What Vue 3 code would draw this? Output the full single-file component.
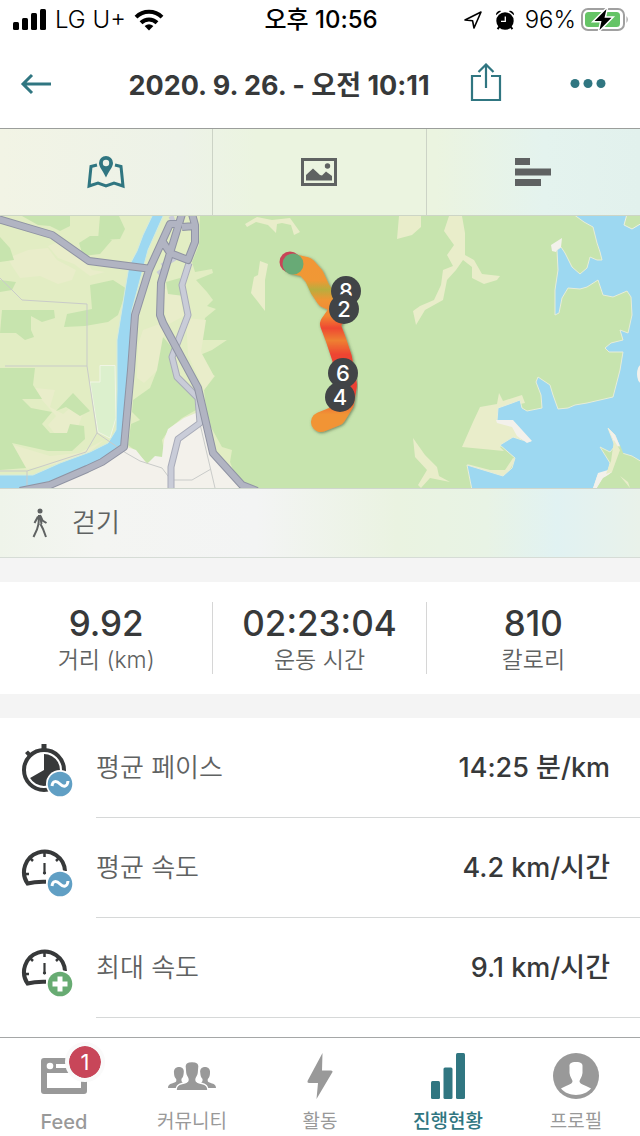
<script setup>
const stats = [
  { value: '9.92', label: '거리 (km)' },
  { value: '02:23:04', label: '운동 시간' },
  { value: '810', label: '칼로리' },
]

const details = [
  { icon: 'stopwatch', badge: 'average', label: '평균 페이스', value: '14:25 분/km' },
  { icon: 'gauge', badge: 'average', label: '평균 속도', value: '4.2 km/시간' },
  { icon: 'gauge', badge: 'max', label: '최대 속도', value: '9.1 km/시간' },
]

const markers = [
  { x: 346, y: 291, n: 8 },
  { x: 344, y: 309, n: 2 },
  { x: 343, y: 373, n: 6 },
  { x: 340, y: 397, n: 4 },
]
</script>

<template>
  <div class="screen">
    <div class="status">
      <div class="status-side">
        <svg width="34" height="22" viewBox="0 0 34 22" aria-hidden="true">
          <rect x="0" y="13" width="6" height="8" rx="1.5" />
          <rect x="9" y="9" width="6" height="12" rx="1.5" />
          <rect x="18" y="4" width="6" height="17" rx="1.5" />
          <rect x="27" y="0" width="6" height="21" rx="1.5" />
        </svg>
        <span class="carrier">LG U+</span>
        <svg width="30" height="22" viewBox="0 0 30 22" aria-hidden="true">
          <path d="M2 8.2 A18.5 18.5 0 0 1 28 8.2" fill="none" stroke="#000" stroke-width="4" />
          <path d="M7 13.7 A11.5 11.5 0 0 1 23 13.7" fill="none" stroke="#000" stroke-width="4" />
          <path d="M15 21.5 L10.6 17 Q15 13.6 19.4 17 Z" />
        </svg>
      </div>
      <span class="clock">오후 10:56</span>
      <div class="status-side end">
        <svg width="20" height="20" viewBox="0 0 20 20" aria-hidden="true">
          <path d="M2 10 L18 2 L11 18 L9.6 10.8 Z" fill="none" stroke="#000" stroke-width="1.6" stroke-linejoin="round" />
        </svg>
        <svg class="alarm" width="20" height="20" viewBox="0 0 20 20" aria-hidden="true">
          <circle cx="10" cy="11" r="8.700" />
          <path d="M1 5.200 A4 4 0 0 1 6.300 1 Z M13.700 1 A4 4 0 0 1 19 5.200 Z" />
          <path d="M4.500 16.500 L2.600 19.200 M15.500 16.500 L17.400 19.200" stroke="#000" stroke-width="2" />
          <path d="M10.300 6.500 V11.300 H6" fill="none" stroke="#fff" stroke-width="1.300" />
        </svg>
        <span class="percent">96%</span>
        <svg width="48" height="24" viewBox="0 0 48 24" aria-hidden="true">
          <rect x="1" y="1" width="42" height="21" rx="6" fill="none" stroke="#a0a0a0" stroke-width="2" />
          <path d="M45.500 8 q2.500 3.500 0 7 z" fill="#a0a0a0" />
          <rect x="4" y="4" width="35" height="15" rx="3.500" fill="#65c466" />
          <path d="M25.500 1 L13.500 13 H20.500 L18.500 22 L30.500 9.800 H23.500 Z" stroke="#fff" stroke-width="3" />
          <path d="M25.500 1 L13.500 13 H20.500 L18.500 22 L30.500 9.800 H23.500 Z" />
        </svg>
      </div>
    </div>

    <header class="nav">
      <button class="plain back" aria-label="뒤로">
        <svg width="32" height="22" viewBox="0 0 32 22" aria-hidden="true">
          <path d="M31 11 H3 M12 2 L3 11 L12 20" fill="none" stroke="#307681" stroke-width="3" />
        </svg>
      </button>
      <h1>2020. 9. 26. - 오전 10:11</h1>
      <button class="plain share" aria-label="공유">
        <svg width="32" height="42" viewBox="0 0 32 42" aria-hidden="true">
          <path d="M11 13 H2 V37 H30 V13 H21 M16 25 V1.500 M8.500 9 L16 1.500 L23.500 9" fill="none" stroke="#307681" stroke-width="2.200" />
        </svg>
      </button>
      <button class="plain" aria-label="더 보기">
        <svg width="36" height="10" viewBox="0 0 36 10" fill="#307681" aria-hidden="true">
          <circle cx="5" cy="4.500" r="4.500" /><circle cx="18" cy="4.500" r="4.500" /><circle cx="31" cy="4.500" r="4.500" />
        </svg>
      </button>
    </header>

    <div class="views">
      <button class="plain view" aria-label="지도">
        <svg width="40" height="34" viewBox="0 0 40 34" aria-hidden="true">
          <path d="M11 10 L5 11.500 L3 31 L12 28 L20 31 L28 28 L37 31 L35 11.500 L29 10" fill="none" stroke="#307681" stroke-width="3" />
          <path d="M20 1 A7 7 0 0 1 27 8 C27 12 23 16 20 22.500 C17 16 13 12 13 8 A7 7 0 0 1 20 1 Z" fill="#307681" />
          <circle cx="20" cy="8" r="3.200" fill="#eef3e8" />
        </svg>
      </button>
      <button class="plain view" aria-label="사진">
        <svg width="36" height="28" viewBox="0 0 36 28" fill="#5f6262" aria-hidden="true">
          <rect x="1.500" y="1.500" width="33" height="25" fill="none" stroke="#5f6262" stroke-width="3" />
          <circle cx="26.500" cy="8" r="2.700" />
          <path d="M5 22.500 V17 L12 10.500 L19 17 L21 17.500 L25 13.500 L31 18 V22.500 Z" />
        </svg>
      </button>
      <button class="plain view" aria-label="구간">
        <svg width="36" height="28" viewBox="0 0 36 28" fill="#5f6262" aria-hidden="true">
          <rect width="15" height="7" /><rect y="10.500" width="36" height="7" /><rect y="21" width="26" height="7" />
        </svg>
      </button>
    </div>

    <svg class="map" viewBox="0 216 640 272" role="img" aria-label="운동 경로 지도">
      <defs>
        <linearGradient id="effort" gradientUnits="userSpaceOnUse" x1="0" y1="256" x2="0" y2="432">
          <stop offset="0" stop-color="#f29636" />
          <stop offset="0.14" stop-color="#f09835" />
          <stop offset="0.19" stop-color="#b9ad3d" />
          <stop offset="0.25" stop-color="#f09535" />
          <stop offset="0.34" stop-color="#f28732" />
          <stop offset="0.41" stop-color="#ee4833" />
          <stop offset="0.48" stop-color="#ee8033" />
          <stop offset="0.56" stop-color="#ee4432" />
          <stop offset="0.78" stop-color="#ec4030" />
          <stop offset="0.9" stop-color="#f19435" />
          <stop offset="1" stop-color="#f19435" />
        </linearGradient>
        <filter id="soft" x="-20%" y="-20%" width="140%" height="140%">
          <feDropShadow dx="1" dy="1" stdDeviation="1.500" flood-color="#4b6040" flood-opacity="0.700" />
        </filter>
      </defs>
      <rect x="0" y="216" width="640" height="272" fill="#c7e4ae" />

      <path fill="#e2edc3" d="M0 216 H200 L199 245 192 262 195 272 212 269 213 273 196 280 207 292 213 300 207 306 216 309 205 318 201 340 227 340 212 350 200 355 203 368 215 376 204 390 207 420 222 447 232 450 230 462 237 480 245 488 H0Z" />
      <g fill="#e9edca">
        <path d="M8 258 L28 250 48 248 57 260 76 270 72 280 58 284 40 276 20 278 12 266Z" />
        <path d="M63 240 L78 248 92 270 105 272 90 276 74 264 58 258 48 246Z" />
        <path d="M143 330 L165 322 163 346 158 370 144 383 137 378 138 345Z" />
        <path d="M186 318 L206 320 201 352 214 376 204 390 188 355Z" />
        <path d="M35 388 L55 390 50 407 63 414 70 408 84 411 76 432 55 434 48 425 56 416 42 400Z" />
        <path d="M10 444 L50 456 79 453 104 440 80 460 27 469Z" />
        <path d="M161 287 L180 295 184 316 167 325Z" />
      </g>
      <g fill="#c7e4ae">
        <path d="M22 216 H70 V226 L60 231 50 226 38 225Z" />
        <path d="M100 216 H119 L125 229 120 239 98 240Z" />
        <path d="M79 243 L90 236 101 236 112 240 100 254 83 256Z" />
        <path d="M0 237 L10 248 14 260 0 262Z" />
        <path d="M90 285 L113 280 127 289 118 315 108 322 85 326 64 327 67 314 92 309Z" />
        <path d="M2 310 L54 310 55 318 42 322 31 316 31 330 34 337 25 340 16 333 0 333Z" />
        <path d="M0 368 L35 368 33 385 42 399 22 399 31 408 52 412 42 424 50 433 67 433 70 424 84 426 85 439 72 451 48 451 12 443 26 468 0 470Z" />
        <path d="M56 411 L73 393 90 411 80 416 66 407Z" />
        <path d="M163 337 L174 350 174 374 196 397 196 410 182 418 170 428 162 440 165 456 147 463 136 451 128 445 131 424 140 420 132 412 133 400 150 388 157 370Z" />
        <path d="M166 282 L180 278 184 296 168 294Z" />
        <path d="M0 280 L16 282 12 290 0 292Z" />
      </g>
      <path fill="#f3f1eb" d="M20 488 L90 472 127 447 136 450 147 464 155 456 162 457 164 440 168 429 184 418 203 410 213 453 240 488Z" />
      <path fill="#dcf0cd" stroke="#f0f5e4" d="M100 365.500 H115 L116 418 110 438 98 432 90 382 H100Z" />

      <path fill="#9dd8f1" stroke="#d5ebdc" d="M153 214 L143 235 137 251 129 266 125 290 121 315 117 340 117 390 116 430 108 443 90 452 60 463 33 475 -2 475 V490 L30 488 60 478 88 468 105 458 124 445 127 400 132 310 140 280 148 250 164 214Z" />

      <g fill="none" stroke="#c9cbc9" stroke-width="1">
        <path d="M0 278 L22 300 55 302 87 304 V366 H5 M87 366 L97 433 86 452 27 471 H0 M97 433 L126 453 140 461 162 468 171 480 192 480 211 469 M200 424 L215 488 M27 471 V488" />
      </g>

      <g fill="none" stroke-linejoin="round">
        <path stroke="#a8abb9" stroke-width="7" d="M189 263 L182 285 188 315 172 357 177 377 198 398 200 423 178 439 171 467 V492" />
        <path stroke="#c9ccd8" stroke-width="5" d="M189 263 L182 285 188 315 172 357 177 377 198 398 200 423 178 439 171 467 V492 M166 268 L158 274 M175 258 L162 266 M171 216 L174 224" />
        <path stroke="#8f93a3" stroke-width="8" d="M-2 219 L52 235 89 261 128 266 152 269 M182 214 L170 253 161 283 160 315 163 323 198 388 213 453 242 485 257 491 M179 224 L170 224 149 270 135 315 131 370 124 447 102 462 87 469 50 485 20 491 M192 214 L195 225 V242 L188 260 170 253 163 242 M182 227 L195 226" />
        <path stroke="#b1b4c2" stroke-width="6" d="M-2 219 L52 235 89 261 128 266 152 269 M182 214 L170 253 161 283 160 315 163 323 198 388 213 453 242 485 257 491 M179 224 L170 224 149 270 135 315 131 370 124 447 102 462 87 469 50 485 20 491 M192 214 L195 225 V242 L188 260 170 253 163 242 M182 227 L195 226" />
      </g>

      <g fill="#e9edca">
        <path d="M260 261 L268 264 265 280 265 311 251 293 254 277 258 275Z" />
        <path d="M245 224 L257 217 272 220 290 218 300 232 294 235 291 225 282 223 277 224 276 233 268 225 256 222 247 227Z" />
        <path d="M399 216 H421 V227 L412 235 397 239Z" />
        <path d="M449 216 H462 L465 233 465 255 474 260 482 274 500 276 497 280 484 284 472 278 472 267 463 260 456 270 447 280 443 300 425 310 416 325 413 311 420 306 434 300 441 285 443 270 453 266 447 255 454 245 444 231Z" />
        <path d="M413 438 L425 455 437 467 439 476 450 482 430 478 421 488 418 485 427 470 415 457Z" />
        <path d="M462 447 L473 422 480 407 497 404 499 393 503 401 522 395 525 403 500 408 497 422 513 425 532 441 513 438 500 447 504 451 Z" />
        <path d="M467 464 L490 470 505 470 513 458 516 459 505 478 480 473Z" />
      </g>

      <path fill="#9dd8f1" stroke="#e7edd8" stroke-linejoin="round" d="M573 214 L584 222 593 227 597 243 600 252 602 260 597 260 590 257 587 268 580 274 572 267 565 253 561 247 557 250 558 270 555 290 555 315 559 313 562 298 568 288 580 289 587 287 598 280 603 295 613 297 627 291 631 297 632 315 628 333 620 330 623 340 611 343 605 348 609 352 623 352 620 370 613 397 600 400 587 403 575 405 568 408 558 409 553 395 550 385 538 377 536 382 541 395 542 408 527 411 522 408 520 400 512 403 498 408 497 421 513 425 520 433 531 441 522 440 513 437 500 445 515 458 512 468 503 476 490 472 467 465 472 490 H593 L598 475 608 471 610 463 600 447 610 452 615 446 608 428 615 435 622 453 632 456 642 462 V214Z" />
      <path fill="#f3f1eb" d="M551 245 L562 238 561 247 557 250 556 252 552 251Z M496 420 L513 420 532 441 527 443 517 436 512 427 497 423Z M593 488 L598 473 608 470 612 472 602 480 597 488Z M608 428 L615 435 620 446 616 447Z" />
      <path fill="#c7e4ae" stroke="#eef0df" d="M627 214 L624 225 632 229 642 223 V214Z" />
      <path fill="#c7e4ae" d="M597 488 L603 478 612 473 620 445 625 458 640 464 V488Z" />
      <path fill="#e9edca" d="M614 440 L620 450 612 472 606 474 611 461Z M620 476 L628 482 630 488 Z" />
      <ellipse cx="641" cy="374" rx="4" ry="9" fill="#f3f1eb" />

      <g filter="url(#soft)" fill="none" stroke="url(#effort)" stroke-width="20" stroke-linecap="round" stroke-linejoin="round">
        <path d="M293 264 L306 267 314 276 320 289 326 298 337 303" />
        <path d="M337 314 L330 324 336 340 342 358 347 385 344 403 336 416 321 422" />
      </g>
      <circle cx="290" cy="262" r="10.500" fill="#c94457" />
      <circle cx="293" cy="264" r="10.500" fill="#68aa76" />
      <g v-for="m in markers" :key="m.n">
        <circle :cx="m.x" :cy="m.y" r="15" fill="#414447" />
        <text :x="m.x" :y="m.y + 8" class="marker">{{ m.n }}</text>
      </g>
    </svg>

    <div class="activity">
      <svg width="16" height="30" viewBox="0 0 16 30" fill="none" stroke="#5f6262" stroke-width="2" aria-hidden="true">
        <circle cx="8" cy="3" r="2.500" fill="#5f6262" stroke="none" />
        <path d="M7 7 L6.500 17 M8 7 L9.500 16 M6 8.500 L2.500 15 M8.500 8 L10.500 12.500 L14.500 15 M6.500 16 L5 21.500 L1.500 29 M8.500 16 L11 21 L14 29" />
      </svg>
      <span>걷기</span>
    </div>

    <section class="stats">
      <div v-for="s in stats" :key="s.label" class="stat">
        <strong>{{ s.value }}</strong>
        <span>{{ s.label }}</span>
      </div>
    </section>

    <ul class="details">
      <li v-for="d in details" :key="d.label">
        <svg width="54" height="54" viewBox="0 0 54 54" aria-hidden="true">
          <g v-if="d.icon === 'stopwatch'">
            <circle cx="24" cy="26" r="20" fill="none" stroke="#37393a" stroke-width="4" />
            <path d="M21.500 0 h5 v6 h-5 Z M5 9 l3 -2.500 4 4 -3 3 Z" fill="#37393a" />
            <path d="M24 26 V10 A16 16 0 1 1 10.100 34 Z" fill="#37393a" />
          </g>
          <g v-else fill="none" stroke="#37393a">
            <path d="M45 27 A20.500 20.500 0 1 0 7.500 39.500 Q15 37.500 26 37.800" stroke-width="4" />
            <path d="M24.500 7 V13 M4 30 H9 M10 14 L13 17 M39 14 L36 17" stroke-width="2.500" />
            <path d="M24.500 19 V30" stroke-width="2.200" />
            <circle cx="24.500" cy="29" r="1.200" />
          </g>
          <circle cx="40" cy="40" r="14" fill="#fff" />
          <circle cx="40" cy="40" r="12.300" :fill="d.badge === 'max' ? '#67ab72' : '#609fc4'" />
          <path v-if="d.badge === 'max'" d="M40 32.500 V47.500 M32.500 40 H47.500" stroke="#fff" stroke-width="5" />
          <path v-else d="M32 42 C32.500 36.500 36.500 36.500 40 40 C43.500 43.500 47.500 43 48 37" fill="none" stroke="#fff" stroke-width="3" />
        </svg>
        <div class="detail">
          <span>{{ d.label }}</span>
          <strong>{{ d.value }}</strong>
        </div>
      </li>
    </ul>

    <nav class="tabs">
      <a href="#feed" class="feed">
        <span class="glyph">
          <svg width="46" height="36" viewBox="0 0 46 36" aria-hidden="true">
            <path fill-rule="evenodd" fill="#999" d="M3 0 H43 Q46 0 46 3 V33 Q46 36 43 36 H3 Q0 36 0 33 V3 Q0 0 3 0 Z M6 15 V30 H40 V15 Z M15 6 V10 H42 V6 Z" />
            <circle cx="9" cy="8" r="3.300" fill="#fff" />
          </svg>
          <span class="count">1</span>
        </span>
        Feed
      </a>
      <a href="#community">
        <span class="glyph">
          <svg width="48" height="28" viewBox="0 0 48 28" fill="#999" aria-hidden="true">
            <path d="M11 5 C14 5 16.500 7 15.700 11 C15.500 15 14 16 13.500 17 C13 20 15 20.500 15 21 L9 26 H0 C0 22 3 22 6.500 20.500 C8.500 20 8.500 19 8.200 17 C7 16 6 14 6 11 C5.500 7 8 5 11 5Z" />
            <path d="M37 5 C34 5 31.500 7 32.300 11 C32.500 15 34 16 34.500 17 C35 20 33 20.500 33 21 L39 26 H48 C48 22 45 22 41.500 20.500 C39.500 20 39.500 19 39.800 17 C41 16 42 14 42 11 C42.500 7 40 5 37 5Z" />
            <path stroke="#fff" stroke-width="1.500" d="M24 -0.500 C29 -0.500 31.500 1.500 31 5 L30.500 11 C30 15 28 15 28 18 C28 20 30 20.500 34 21.500 C38 22.500 40 24 40 28.700 H8 C8 24 10 22.500 14 21.500 C18 20.500 20 20 20 18 C20 15 18 15 17.500 11 L17 5 C16.500 1.500 19 -0.500 24 -0.500Z" />
          </svg>
        </span>
        커뮤니티
      </a>
      <a href="#workout">
        <span class="glyph">
          <svg width="26" height="46" viewBox="0 0 26 46" fill="#999" aria-hidden="true">
            <path d="M15.500 0 L0.500 28 Q0 30 2 30 H11 L9.500 46 L25.500 19 Q26 17.500 24 17.500 H15 Z" />
          </svg>
        </span>
        활동
      </a>
      <a href="#progress" class="active" aria-current="page">
        <span class="glyph">
          <svg width="34" height="46" viewBox="0 0 34 46" fill="#307681" aria-hidden="true">
            <rect x="0" y="28" width="9" height="18" rx="1.500" /><rect x="12.500" y="14.500" width="9" height="31.500" rx="1.500" /><rect x="25" y="0" width="9" height="46" rx="1.500" />
          </svg>
        </span>
        진행현황
      </a>
      <a href="#profile">
        <span class="glyph">
          <svg width="46" height="46" viewBox="0 0 46 46" aria-hidden="true">
            <circle cx="23" cy="23" r="23" fill="#999" />
            <path fill="#fff" d="M23 9 C28 9 30 10.500 29.500 14 L29.500 20 C29 24 27 26 26.500 28 C26.500 31 30 31.500 33 33 C36 34.500 38 35.500 38 35.500 C31 44 15 44 8 35.500 C8 35.500 10 34.500 13 33 C16 31.500 19.500 31 19.500 28 C19 26 17 24 16.500 20 L16.500 14 C16 10.500 18 9 23 9Z" />
          </svg>
        </span>
        프로필
      </a>
    </nav>
  </div>
</template>

<style>
body {
  background: #f4f4f4;
}
</style>

<style scoped>
.screen {
  box-sizing: border-box;
  display: flex;
  flex-direction: column;
  min-height: 100vh;
  background: #f4f4f4;
  color: #37393a;
  font-family: Inter, "Noto Sans CJK KR", sans-serif;
}

.plain {
  display: flex;
  align-items: center;
  padding: 0;
  border: 0;
  background: none;
  cursor: pointer;
}

.status {
  display: grid;
  grid-template-columns: 1fr auto 1fr;
  align-items: center;
  height: 40px;
  padding: 0 11px 0 13px;
  background: #fff;
  color: #000;
  font-size: 24px;
  line-height: 32px;
}

.status-side {
  display: flex;
  align-items: center;
  gap: 8px;
}

.end {
  gap: 5px;
  justify-content: flex-end;
}

.alarm {
  margin: 0 5px 0 7px;
}

.carrier,
.percent {
  font-weight: 300;
}

.clock {
  font-weight: 500;
}

.nav {
  display: flex;
  align-items: center;
  height: 88px;
  padding: 0 34px 0 20px;
  border-bottom: 1px solid #9b9e9b;
  background: #fff;
}

.back {
  width: 68px;
}

h1 {
  flex: 1;
  margin: 0;
  padding-top: 4px;
  font-size: 27px;
  font-weight: 700;
  line-height: 36px;
  text-align: center;
  white-space: nowrap;
}

.share {
  margin-right: 68px;
}

.views {
  display: grid;
  grid-template-columns: repeat(3, 1fr);
  height: 86px;
  border-bottom: 1px solid #cdd5c6;
  background: linear-gradient(90deg, #f2f4e5, #edf2e8 28%, #ebf4e0 40%, #ebf4e0 68%, #e4f3ee 85%, #e2f1ed);
}

.view {
  justify-content: center;
}

.view:not(:last-child) {
  border-right: 1px solid #ccd3c6;
}

.map {
  display: block;
  width: 100%;
}

.marker {
  fill: #fff;
  font-size: 22px;
  font-weight: 500;
  text-anchor: middle;
}

.activity {
  display: flex;
  align-items: center;
  gap: 24px;
  height: 68px;
  padding: 0 32px;
  border-top: 1px solid #cfd6cd;
  border-bottom: 1px solid #d6dcd6;
  background: linear-gradient(90deg, #eff4ea, #f4f5f2 15%, #f3f4f4 40%, #eaf3e1 62%, #e8f3e5 76%, #e1f2f2 87%, #e9f2ea);
  color: #5f6262;
  font-size: 26px;
  font-weight: 350;
  line-height: 34px;
}

.stats {
  display: grid;
  grid-template-columns: repeat(3, 1fr);
  margin: 24px 0;
  padding: 20px 0;
  background: #fff;
}

.stat {
  display: flex;
  flex-direction: column;
  align-items: center;
  height: 72px;
}

.stat:not(:last-child) {
  border-right: 1px solid #d6d6d6;
}

.stat strong {
  font-size: 35px;
  font-weight: 500;
  line-height: 42px;
}

.stat span {
  color: #5f6262;
  font-size: 23px;
  font-weight: 350;
  line-height: 32px;
}

.details {
  flex: 1;
  margin: 0;
  padding: 0;
  background: #fff;
  list-style: none;
}

.details li {
  display: flex;
  align-items: center;
  gap: 22px;
  padding-left: 20px;
}

.details svg {
  margin-top: 5px;
}

.detail {
  box-sizing: border-box;
  display: flex;
  flex: 1;
  align-items: center;
  justify-content: space-between;
  height: 100px;
  padding: 0 30px 4px 0;
  border-bottom: 1px solid #d6d8d8;
  font-size: 27px;
}

.detail span {
  color: #5f6262;
  font-size: 26px;
  font-weight: 350;
}

.detail strong {
  font-weight: 500;
}

.tabs {
  position: sticky;
  bottom: 0;
  display: grid;
  grid-template-columns: repeat(5, 1fr);
  height: 98px;
  border-top: 1px solid #a5a7a7;
  background: #fff;
}

.tabs a {
  display: flex;
  flex-direction: column;
  align-items: center;
  color: #999;
  font-size: 19px;
  line-height: 28px;
  text-decoration: none;
}

.tabs .feed {
  font-size: 20px;
  font-weight: 500;
}

.tabs .active {
  color: #307681;
  font-weight: 500;
}

.glyph {
  position: relative;
  display: flex;
  align-items: center;
  height: 70px;
  padding-top: 6px;
  box-sizing: border-box;
}

.count {
  position: absolute;
  top: 4px;
  right: -18px;
  width: 32px;
  height: 32px;
  border: 4px solid #fafafa;
  border-radius: 50%;
  background: #c84659;
  background-clip: padding-box;
  color: #fff;
  font-size: 22px;
  font-weight: 400;
  line-height: 32px;
  text-align: center;
}
</style>
